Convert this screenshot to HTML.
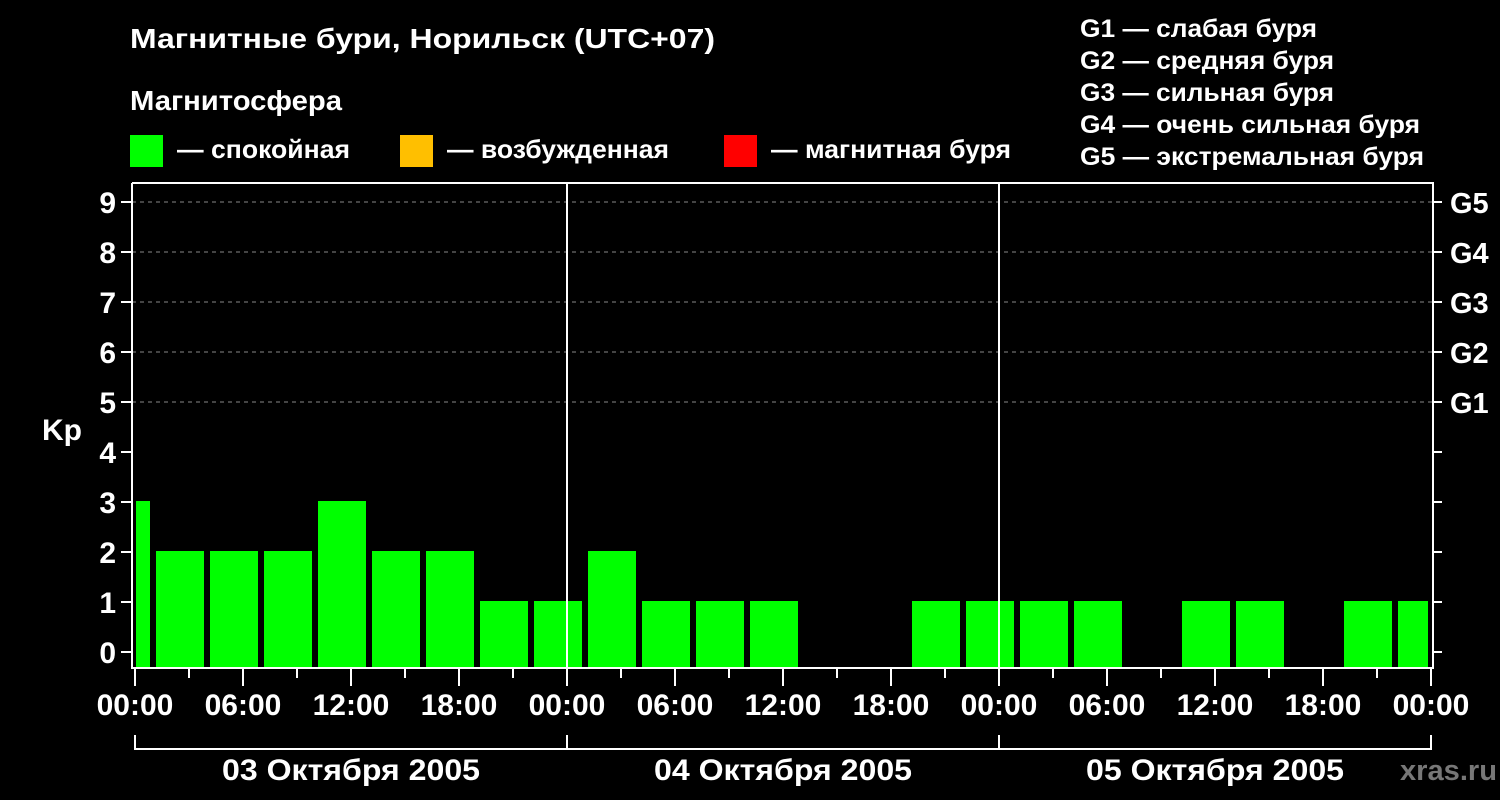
<!DOCTYPE html>
<html><head><meta charset="utf-8"><style>
html,body{margin:0;padding:0;background:#000;width:1500px;height:800px;overflow:hidden}
svg{display:block}
text{font-family:"Liberation Sans",sans-serif;font-weight:bold;fill:#fff}
</style></head><body>
<svg width="1500" height="800" viewBox="0 0 1500 800">
<rect width="1500" height="800" fill="#000"/>
<text x="130" y="48" font-size="28" textLength="585" lengthAdjust="spacingAndGlyphs">Магнитные бури, Норильск (UTC+07)</text>
<text x="130" y="110" font-size="28" textLength="212" lengthAdjust="spacingAndGlyphs">Магнитосфера</text>
<rect x="130" y="135" width="33" height="32" fill="#00ff00"/>
<text x="177" y="158" font-size="26" textLength="173" lengthAdjust="spacingAndGlyphs">— спокойная</text>
<rect x="400" y="135" width="33" height="32" fill="#ffbf00"/>
<text x="447" y="158" font-size="26" textLength="222" lengthAdjust="spacingAndGlyphs">— возбужденная</text>
<rect x="724" y="135" width="33" height="32" fill="#ff0000"/>
<text x="771" y="158" font-size="26" textLength="240" lengthAdjust="spacingAndGlyphs">— магнитная буря</text>
<g font-size="25">
<text x="1080" y="37" textLength="237" lengthAdjust="spacingAndGlyphs">G1 — слабая буря</text>
<text x="1080" y="69" textLength="254" lengthAdjust="spacingAndGlyphs">G2 — средняя буря</text>
<text x="1080" y="101" textLength="254" lengthAdjust="spacingAndGlyphs">G3 — сильная буря</text>
<text x="1080" y="133" textLength="340" lengthAdjust="spacingAndGlyphs">G4 — очень сильная буря</text>
<text x="1080" y="165" textLength="344" lengthAdjust="spacingAndGlyphs">G5 — экстремальная буря</text>
</g>
<g stroke="#888" stroke-width="1" stroke-dasharray="4,4">
<line x1="132" y1="202" x2="1432" y2="202"/><line x1="132" y1="252" x2="1432" y2="252"/>
<line x1="132" y1="302" x2="1432" y2="302"/><line x1="132" y1="352" x2="1432" y2="352"/>
<line x1="132" y1="402" x2="1432" y2="402"/>
</g>
<g fill="#00ff00">
<rect x="136" y="501" width="14" height="166"/>
<rect x="156" y="551" width="48" height="116"/>
<rect x="210" y="551" width="48" height="116"/>
<rect x="264" y="551" width="48" height="116"/>
<rect x="318" y="501" width="48" height="166"/>
<rect x="372" y="551" width="48" height="116"/>
<rect x="426" y="551" width="48" height="116"/>
<rect x="480" y="601" width="48" height="66"/>
<rect x="534" y="601" width="48" height="66"/>
<rect x="588" y="551" width="48" height="116"/>
<rect x="642" y="601" width="48" height="66"/>
<rect x="696" y="601" width="48" height="66"/>
<rect x="750" y="601" width="48" height="66"/>
<rect x="912" y="601" width="48" height="66"/>
<rect x="966" y="601" width="48" height="66"/>
<rect x="1020" y="601" width="48" height="66"/>
<rect x="1074" y="601" width="48" height="66"/>
<rect x="1182" y="601" width="48" height="66"/>
<rect x="1236" y="601" width="48" height="66"/>
<rect x="1344" y="601" width="48" height="66"/>
<rect x="1398" y="601" width="30" height="66"/>
</g>
<g stroke="#fff" stroke-width="2" fill="none">
<polyline points="132,183 1433,183 1433,668 132,668 132,183"/>
<line x1="567" y1="183" x2="567" y2="668"/>
<line x1="999" y1="183" x2="999" y2="668"/>
<path d="M121 652H132M121 602H132M121 552H132M121 502H132M121 452H132M121 402H132M121 352H132M121 302H132M121 252H132M121 202H132"/>
<path d="M1433 652H1442M1433 602H1442M1433 552H1442M1433 502H1442M1433 452H1442M1433 402H1442M1433 352H1442M1433 302H1442M1433 252H1442M1433 202H1442"/>
<path d="M135 669V686M243 669V686M351 669V686M459 669V686M567 669V686M675 669V686M783 669V686M891 669V686M999 669V686M1107 669V686M1215 669V686M1323 669V686M1431 669V686"/>
<path d="M189 669V678M297 669V678M405 669V678M513 669V678M621 669V678M729 669V678M837 669V678M945 669V678M1053 669V678M1161 669V678M1269 669V678M1377 669V678"/>
<path d="M135 735V749H1431V735M567 735V749M999 735V749"/>
</g>
<g font-size="30" text-anchor="end">
<text x="116" y="663">0</text><text x="116" y="613">1</text><text x="116" y="563">2</text>
<text x="116" y="513">3</text><text x="116" y="463">4</text><text x="116" y="413">5</text>
<text x="116" y="363">6</text><text x="116" y="313">7</text><text x="116" y="263">8</text>
<text x="116" y="213">9</text>
</g>
<g font-size="29">
<text x="1450" y="413">G1</text><text x="1450" y="363">G2</text><text x="1450" y="313">G3</text>
<text x="1450" y="263">G4</text><text x="1450" y="213">G5</text>
</g>
<text x="42" y="440" font-size="30">Kp</text>
<g font-size="30" text-anchor="middle">
<text x="135" y="715">00:00</text><text x="243" y="715">06:00</text><text x="351" y="715">12:00</text>
<text x="459" y="715">18:00</text><text x="567" y="715">00:00</text><text x="675" y="715">06:00</text>
<text x="783" y="715">12:00</text><text x="891" y="715">18:00</text><text x="999" y="715">00:00</text>
<text x="1107" y="715">06:00</text><text x="1215" y="715">12:00</text><text x="1323" y="715">18:00</text>
<text x="1431" y="715">00:00</text>
<text x="351" y="780" textLength="258" lengthAdjust="spacingAndGlyphs">03 Октября 2005</text>
<text x="783" y="780" textLength="258" lengthAdjust="spacingAndGlyphs">04 Октября 2005</text>
<text x="1215" y="780" textLength="258" lengthAdjust="spacingAndGlyphs">05 Октября 2005</text>
</g>
<text x="1400" y="780" font-size="29" textLength="97" lengthAdjust="spacingAndGlyphs" style="fill:#777">xras.ru</text>
</svg>
</body></html>
